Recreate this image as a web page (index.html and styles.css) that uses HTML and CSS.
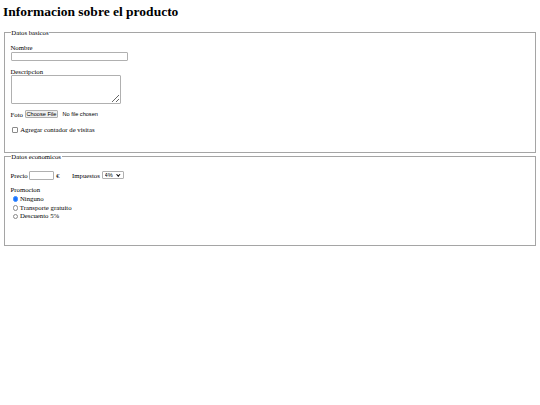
FILE: index.html
```html
<!DOCTYPE html>
<html lang="es">
<head>
  <meta charset="UTF-8">
  <title>Informacion sobre el producto</title>
  <link rel="stylesheet" href="styles.css">
</head>
<body>
  <h1>Informacion sobre el producto</h1>

  <form>
    <fieldset class="bloque bloque-basico">
      <legend>Datos basicos</legend>

      <div class="campo">
        <label for="nombre" class="etq">Nombre</label>
        <input type="text" id="nombre" name="nombre" class="txt txt-nombre">
      </div>

      <div class="campo">
        <label for="descripcion" class="etq">Descripcion</label>
        <textarea id="descripcion" name="descripcion" class="txt txt-desc"></textarea>
      </div>

      <div class="campo fila campo-foto">
        <label for="foto">Foto</label>
        <input type="file" id="foto" name="foto" class="file">
      </div>

      <div class="campo fila campo-check">
        <input type="checkbox" id="visitas" name="visitas" class="check">
        <label for="visitas">Agregar contador de visitas</label>
      </div>
    </fieldset>

    <fieldset class="bloque bloque-eco">
      <legend>Datos economicos</legend>

      <div class="campo fila campo-precio">
        <label for="precio">Precio</label>
        <input type="text" id="precio" name="precio" class="txt txt-precio">
        <span class="moneda">&euro;</span>
        <label for="impuestos" class="lbl-imp">Impuestos</label>
        <span class="sel-box">
          <select id="impuestos" name="impuestos" class="sel">
            <option>4%</option>
            <option>10%</option>
            <option>21%</option>
          </select>
        </span>
      </div>

      <div class="campo campo-promo">
        Promocion<br>
        <input type="radio" name="promo" id="p1" class="radio" checked> <label for="p1">Ninguno</label><br>
        <input type="radio" name="promo" id="p2" class="radio"> <label for="p2">Transporte gratuito</label><br>
        <input type="radio" name="promo" id="p3" class="radio"> <label for="p3">Descuento 5%</label>
      </div>
    </fieldset>
  </form>
</body>
</html>
```

FILE: styles.css
```css
body { margin: 4px 3px; font-family: "Liberation Serif", "Times New Roman", serif; font-size: 6.75px; color: #000; background: #fff; }
h1 { margin: 0 0 8.6px 0; font-size: 13.5px; }

.bloque { margin: 0 1px; padding: 2.4px 5.5px 3px; border: 1px solid #a5a5a5; box-sizing: border-box; }
.bloque legend { padding: 0 0.8px; }
.bloque-basico { height: 124px; }
.bloque-eco { height: 93.4px; }

.campo { margin: 6.4px 0; }
.fila { display: flex; align-items: center; }
.campo-foto { margin-top: 6.8px; }
.campo-check { margin-top: 8px; }
.campo-precio { margin-top: 9px; }
.campo-promo { margin-top: 6px; line-height: 8.7px; }
.etq { display: block; }

.txt { display: block; margin: 0; padding: 0 1px; font-family: "Liberation Sans", Arial, sans-serif; font-size: 5.6px; border: 1px solid #b0b0b0; border-radius: 1px; box-sizing: border-box; }
.txt-nombre { width: 117px; height: 9px; margin-top: 1px; }
.txt-desc { width: 110px; height: 28.5px; margin-top: 0.4px; }
.txt-precio { width: 25px; height: 9px; margin-left: 1.7px; }

.file { margin-left: 1.7px; font-family: "Liberation Sans", Arial, sans-serif; font-size: 5.6px; }
.file::file-selector-button { font: inherit; height: 8px; padding: 0 1px; margin-right: 4px; border: 1px solid #b0b0b0; border-radius: 1px; background: #efefef; color: #000; }

.check { appearance: none; width: 5.5px; height: 5.5px; margin: 0 2.5px 0 1.7px; border: 1px solid #8a8a8a; border-radius: 1px; background: #fff; }

.radio { appearance: none; width: 5.5px; height: 5.5px; margin: 0 0.2px 0 2.1px; border: 1px solid #8a8a8a; border-radius: 50%; background: #fff; box-sizing: border-box; vertical-align: -0.9px; }
.radio:checked { border-color: #3b8cff; background: #1a73ff; }

.moneda { margin-left: 1.7px; }
.lbl-imp { margin-left: 12.6px; }
.sel-box { position: relative; margin-left: 1.7px; }
.sel { display: block; appearance: none; width: 22px; height: 8px; padding: 0 0 0 2px; font-family: "Liberation Sans", Arial, sans-serif; font-size: 5.6px; color: #000; border: 1px solid #b0b0b0; border-radius: 1px; background: #fff; }
.sel-box::after { content: ""; position: absolute; right: 3.5px; top: 1.6px; width: 1.6px; height: 1.6px; border-right: 1px solid #000; border-bottom: 1px solid #000; transform: rotate(45deg); pointer-events: none; }
```
